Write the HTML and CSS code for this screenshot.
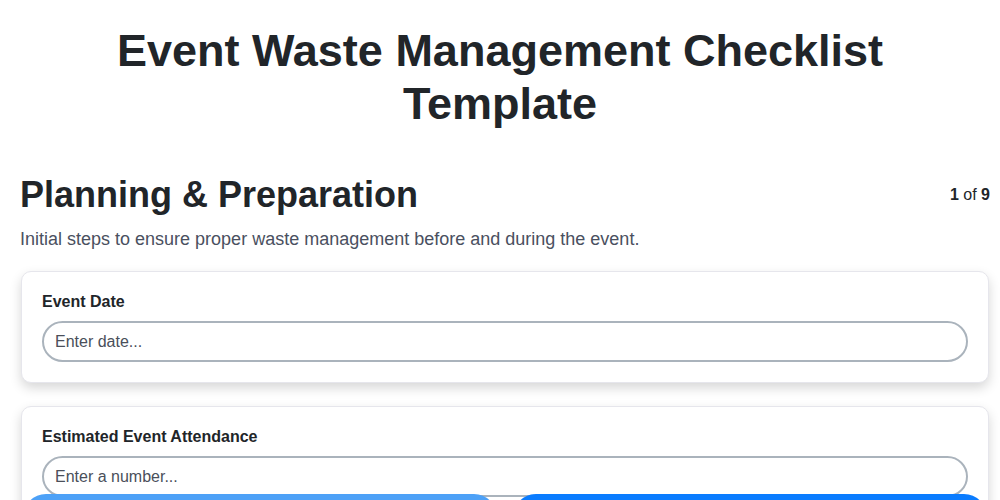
FILE: index.html
```html
<!DOCTYPE html>
<html lang="en">
<head>
<meta charset="utf-8">
<title>Event Waste Management Checklist Template</title>
<link rel="stylesheet" href="styles.css">
</head>
<body>
<main class="page">
  <h1 class="title">Event Waste Management Checklist Template</h1>
  <section class="step">
    <div class="step-head">
      <h2 class="step-title">Planning &amp; Preparation</h2>
      <div class="step-count"><b>1</b> of <b>9</b></div>
    </div>
    <p class="step-desc">Initial steps to ensure proper waste management before and during the event.</p>
    <div class="card">
      <label class="field-label" for="f1">Event Date</label>
      <input class="field-input" id="f1" type="text" placeholder="Enter date...">
    </div>
    <div class="card">
      <label class="field-label" for="f2">Estimated Event Attendance</label>
      <input class="field-input" id="f2" type="text" placeholder="Enter a number...">
    </div>
  </section>
</main>
<nav class="footer-nav">
  <button class="btn btn-prev" type="button" aria-label="Previous"></button>
  <button class="btn btn-next" type="button" aria-label="Next"></button>
</nav>
</body>
</html>
```
FILE: styles.css
```css
* { box-sizing: border-box; }
html, body { margin: 0; padding: 0; background: #fff; }
body {
  font-family: "Liberation Sans", Arial, sans-serif;
  color: #212529;
}
.page {
  padding-top: 24px;
}
.title {
  max-width: 820px;
  margin: 0 auto 43px;
  text-align: center;
  font-size: 45px;
  line-height: 53px;
  font-weight: 700;
  color: #212529;
}
.step {
  padding: 0 10px 0 20px;
}
.step-head {
  display: flex;
  justify-content: space-between;
  align-items: center;
}
.step-title {
  margin: 0;
  font-size: 36px;
  line-height: 44px;
  font-weight: 700;
}
.step-count {
  font-size: 16px;
  color: #212529;
}
.step-desc {
  margin: 10px 0 20px;
  font-size: 18px;
  line-height: 24px;
  color: #4a5060;
}
.card {
  display: flex;
  flex-direction: column;
  width: 968px;
  margin: 0 0 23px 1px;
  padding: 21px 20px 20px 20px;
  background: #fff;
  border: 1px solid #e6e6ec;
  border-radius: 10px;
  box-shadow: 0 5px 12px rgba(0, 0, 0, 0.16);
}
.field-label {
  font-size: 16px;
  line-height: 18px;
  font-weight: 700;
  color: #212529;
  margin-bottom: 10px;
}
.field-input {
  height: 41px;
  padding: 0 11px;
  font-family: "Liberation Sans", Arial, sans-serif;
  font-size: 16px;
  color: #212529;
  border: 2px solid #aab3bc;
  border-radius: 21px;
  background: #fff;
  outline: none;
}
.field-input::placeholder { color: #4a4f5a; opacity: 1; }
.footer-nav {
  position: fixed;
  left: 23px;
  right: 13px;
  top: 494px;
  display: flex;
  gap: 16px;
}
.btn {
  flex: 1;
  height: 46px;
  border: none;
  border-radius: 23px;
}
.btn-prev { background: #4da1f7; }
.btn-next { background: #0a7cff; }
```
